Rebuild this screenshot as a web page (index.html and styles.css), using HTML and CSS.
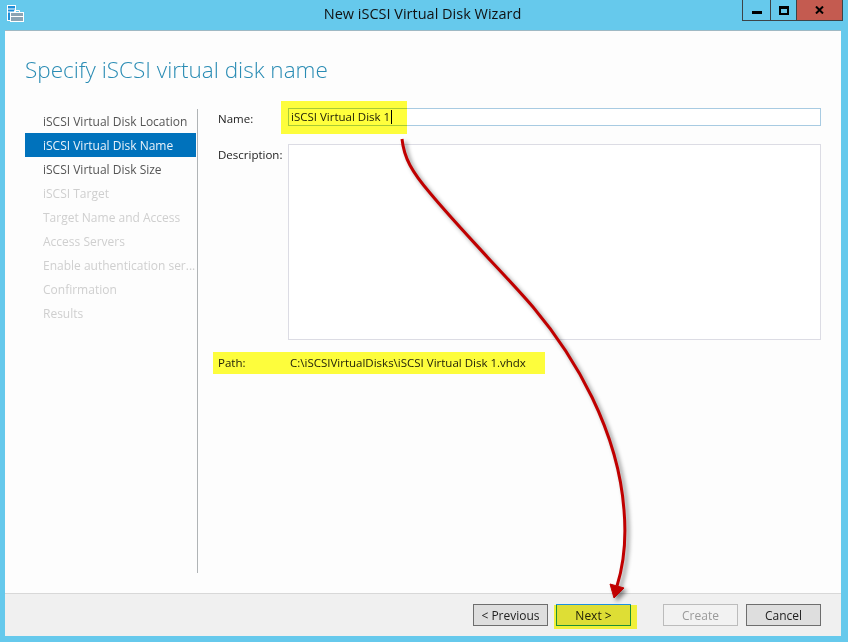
FILE: index.html
```html
<!DOCTYPE html>
<html lang="en">
<head>
<meta charset="utf-8">
<title>New iSCSI Virtual Disk Wizard</title>
<link rel="stylesheet" href="styles.css">
</head>
<body>
<div class="window">
  <header class="titlebar">
    <svg class="app-icon" width="17" height="17" viewBox="0 0 17 17">
      <rect x="0.5" y="0.5" width="8" height="15" fill="#1f8fd8" stroke="#fff"/>
      <rect x="1" y="3.5" width="7" height="1" fill="#fff"/>
      <rect x="1" y="6.5" width="7" height="1" fill="#fff"/>
      <rect x="3.5" y="7.5" width="13" height="9" fill="#8ca4b4" stroke="#fff"/>
      <path d="M7.5 7.5v-2h5v2" fill="none" stroke="#fff"/>
      <rect x="4" y="11" width="12" height="1" fill="#fff"/>
    </svg>
    <h1 class="window-title">New iSCSI Virtual Disk Wizard</h1>
    <div class="controls">
      <div class="ctl ctl-min"><span class="min-glyph"></span></div>
      <div class="ctl ctl-max"><span class="max-glyph"></span></div>
      <div class="ctl ctl-close"><svg width="9" height="8" viewBox="0 0 9 8"><path d="M1 0.5 L8 7.5 M8 0.5 L1 7.5" stroke="#000" stroke-width="2" fill="none"/></svg></div>
    </div>
  </header>
  <main class="client">
    <h2 class="page-title">Specify iSCSI virtual disk name</h2>
    <div class="columns">
      <nav class="steps">
        <div class="step">iSCSI Virtual Disk Location</div>
        <div class="step step-active">iSCSI Virtual Disk Name</div>
        <div class="step">iSCSI Virtual Disk Size</div>
        <div class="step step-off">iSCSI Target</div>
        <div class="step step-off">Target Name and Access</div>
        <div class="step step-off">Access Servers</div>
        <div class="step step-off">Enable authentication ser...</div>
        <div class="step step-off">Confirmation</div>
        <div class="step step-off">Results</div>
      </nav>
      <section class="form">
        <div class="row">
          <label class="label label-name">Name:</label>
          <div class="textbox">iSCSI Virtual Disk 1<span class="caret"></span></div>
        </div>
        <div class="row">
          <label class="label label-desc">Description:</label>
          <div class="textarea"></div>
        </div>
        <div class="row row-path">
          <span class="label">Path:</span>
          <span class="path-value">C:\iSCSIVirtualDisks\iSCSI Virtual Disk 1.vhdx</span>
        </div>
      </section>
    </div>
    <footer class="footer">
      <div class="btn">&lt; Previous</div>
      <div class="btn btn-default">Next &gt;</div>
      <div class="btn btn-disabled">Create</div>
      <div class="btn">Cancel</div>
    </footer>
  </main>
  <div class="hl hl-name"></div>
  <div class="hl hl-path"></div>
  <div class="hl hl-next"></div>
  <svg class="arrow" width="848" height="642" viewBox="0 0 848 642">
    <path d="M402 139 C404 158 412 172 430 193 C450 217 470 238 490 260 C506 277 520 292 533 307 C575 357 618 430 624 510 C627 545 622 570 617 586" fill="none" stroke="#c00000" stroke-width="3"/>
    <path d="M610 584 L624 588 L614 598 Z" fill="#c00000" stroke="#c00000" stroke-linejoin="round"/>
  </svg>
</div>
</body>
</html>
```
FILE: styles.css
```css
* { box-sizing: border-box; }
html, body { margin: 0; padding: 0; }
body { font-family: "Open Sans", "Noto Sans", sans-serif; font-size: 12px; color: #222; }
.window { position: relative; width: 848px; height: 642px; background: #66c9ec; display: flex; flex-direction: column; overflow: hidden; }
.titlebar { position: relative; height: 30px; flex: none; display: flex; align-items: flex-start; justify-content: space-between; padding: 0 5px 0 7px; }
.app-icon { margin-top: 5px; }
.window-title { position: absolute; left: 0; right: 3px; top: 5px; margin: 0; text-align: center; font-size: 14.5px; line-height: 18px; font-weight: 400; color: #111; }
.controls { display: flex; height: 21px; border: 1px solid #3c4448; border-top: 0; }
.ctl { display: flex; align-items: center; justify-content: center; }
.ctl-min { width: 28px; border-right: 1px solid #3c4448; }
.ctl-max { width: 26px; border-right: 1px solid #3c4448; }
.ctl-close { width: 45px; background: #c45b50; }
.min-glyph { width: 10px; height: 3px; background: #000; margin-top: 4px; }
.max-glyph { width: 10px; height: 9px; border: 2px solid #000; border-top-width: 3px; }
.client { flex: 1; margin: 0 7px 6px 5px; background: #fdfdfd; display: flex; flex-direction: column; min-height: 0; border-top: 1px solid #9fb9c4; }
.page-title { margin: 0; padding: 23px 0 0 20px; height: 78px; font-size: 22.5px; line-height: 32px; font-weight: 300; color: #2a8cb4; }
.columns { flex: 1; display: flex; min-height: 0; padding-bottom: 20px; }
.steps { width: 173px; margin-left: 20px; border-right: 1px solid #b0b4b6; }
.step { height: 24px; line-height: 26px; padding-left: 18px; white-space: nowrap; color: #555; margin-right: 1px; }
.step-active { background: #0072bc; color: #e8f2fa; }
.step-off { color: #cfcfcf; }
.form { flex: 1; padding: 0 20px 0 20px; margin-top: -1px; font-size: 11.5px; }
.row { display: flex; }
.label { width: 70px; flex: none; color: #222; }
.label-name { padding-top: 3px; }
.label-desc { padding-top: 3px; }
.textbox { flex: 1; height: 18px; margin-bottom: 18px; border: 1px solid #a8cbe2; line-height: 16px; padding-left: 2px; background: #fff; font-size: 11.5px; }
.caret { display: inline-block; width: 1px; height: 14px; background: #000; vertical-align: -3px; margin-left: 1px; }
.textarea { flex: 1; height: 196px; border: 1px solid #dcdce4; background: #fff; }
.row-path { margin-top: 14px; line-height: 18px; }
.path-value { margin-left: 2px; }
.footer { height: 43px; flex: none; background: #f0f0f0; border-top: 1px solid #d8d8d8; display: flex; padding: 10px 20px 0 0; justify-content: flex-end; }
.btn { width: 75px; height: 22px; border: 1px solid #6e6e6e; background: #dedede; text-align: center; line-height: 21px; margin-left: 8px; color: #222; }
.btn-default { border-color: #1e90e0; margin-right: 24px; }
.btn-disabled { border-color: #bcbcbc; background: #f2f2f2; color: #9a9a9a; margin-left: 8px; }
.hl { position: absolute; background: #ffff3c; mix-blend-mode: multiply; }
.hl-name { left: 281px; top: 101px; width: 126px; height: 33px; }
.hl-path { left: 213px; top: 352px; width: 332px; height: 22px; }
.hl-next { left: 554px; top: 605px; width: 83px; height: 24px; }
.arrow { position: absolute; left: 0; top: 0; filter: drop-shadow(3px 3px 2px rgba(0,0,0,.45)); pointer-events: none; }
```
